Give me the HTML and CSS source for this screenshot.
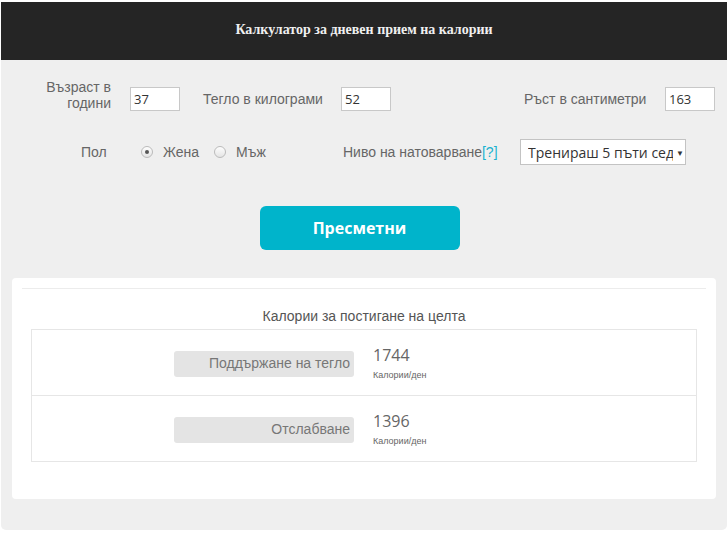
FILE: index.html
```html
<!DOCTYPE html>
<html lang="bg">
<head>
<meta charset="utf-8">
<link rel="stylesheet" href="styles.css">
</head>
<body>
<div class="app">
  <header class="top">Калкулатор за дневен прием на калории</header>
  <section class="form">
    <div class="row row1">
      <label class="lbl lbl-age">Възраст в години</label>
      <input class="num" type="text" value="37">
      <label class="lbl lbl-weight">Тегло в килограми</label>
      <input class="num" type="text" value="52">
      <label class="lbl lbl-height">Ръст в сантиметри</label>
      <input class="num" type="text" value="163">
    </div>
    <div class="row row2">
      <span class="lbl lbl-sex">Пол</span>
      <span class="radios">
        <span class="radio on"></span><span class="rtext">Жена</span>
        <span class="radio"></span><span class="rtext">Мъж</span>
      </span>
      <span class="lbl lbl-level">Ниво на натоварване<a class="help">[?]</a></span>
      <div class="select"><span class="sel-text">Тренираш 5 пъти седмично</span><span class="arrow">▼</span></div>
    </div>
    <div class="btn-row"><button class="calc">Пресметни</button></div>
  </section>
  <section class="card">
    <div class="rule"></div>
    <h2 class="goal">Калории за постигане на целта</h2>
    <div class="results">
      <div class="res-row">
        <div class="tag">Поддържане на тегло</div>
        <div class="val"><div class="num-big">1744</div><div class="unit">Калории/ден</div></div>
      </div>
      <div class="res-row">
        <div class="tag">Отслабване</div>
        <div class="val"><div class="num-big">1396</div><div class="unit">Калории/ден</div></div>
      </div>
    </div>
  </section>
</div>
</body>
</html>
```
FILE: styles.css
```css
* { box-sizing: border-box; }
html, body { margin: 0; padding: 0; background: #fff; }
body { font-family: "Liberation Sans", Arial, sans-serif; color: #666; }
.app {
  margin: 2px 1px 0 1px;
  height: 528px;
  background: #efefef;
  border-radius: 0 0 5px 5px;
}
.top {
  height: 58px;
  background: #252525;
  color: #f0f0f0;
  font-family: "Liberation Serif", serif;
  font-weight: bold;
  font-size: 14px;
  display: flex;
  align-items: center;
  justify-content: center;
  padding-bottom: 2px;
}
.form { padding-top: 12px; }
.row { display: flex; align-items: center; }
.row1 { height: 46px; }
.lbl { font-size: 14px; color: #666; line-height: 16px; }
.lbl-age { width: 110px; text-align: right; padding-left: 40px; }
.num {
  width: 50px; height: 24px;
  border: 1px solid #c8c8c8;
  background: #fff;
  font-family: "Open Sans", sans-serif;
  font-size: 13px;
  color: #333;
  padding: 0 3px;
  margin: 0;
  outline: none;
}
.row1 .num { margin-top: 8px; }
.row1 .lbl-age + .num { margin-left: 19px; }
.lbl-weight { margin-left: 23px; margin-top: 8px; width: 138px; }
.lbl-height { margin-left: 133px; margin-top: 8px; width: 141px; }
.row2 { height: 48px; margin-top: 10px; }
.lbl-sex { margin-left: 80px; width: 60px; }
.radios { display: flex; align-items: center; width: 202px; }
.radio {
  width: 12px; height: 12px; border-radius: 50%;
  border: 1px solid #bbb;
  background: linear-gradient(#fdfdfd, #e4e4e4);
  position: relative;
}
.radio.on::after {
  content: ""; position: absolute; left: 3px; top: 3px;
  width: 4px; height: 4px; border-radius: 50%; background: #555;
}
.rtext { font-size: 14px; color: #666; margin-left: 10px; margin-right: 15px; }
.lbl-level { width: 177px; }
.help { color: #1ab2cf; }
.select {
  width: 166px; height: 26px;
  background: #fff; border: 1px solid #c3c3c3;
  display: flex; align-items: center;
  padding: 0 0 0 7px;
  font-family: "Open Sans", sans-serif; font-size: 14px; color: #333;
  overflow: hidden;
}
.sel-text { flex: none; white-space: nowrap; overflow: hidden; width: 145px; }
.arrow { flex: none; font-size: 8px; color: #333; margin-left: 3px; }
.btn-row { display: flex; justify-content: center; padding-top: 30px; margin-left: -9px; }
.calc {
  width: 200px; height: 44px;
  background: #00b4cb; color: #fff;
  border: none; border-radius: 6px;
  font-family: "Open Sans", sans-serif; font-weight: bold; font-size: 16px;
}
.card {
  margin: 28px 11px 0 11px;
  height: 221px;
  background: #fff;
  border-radius: 4px;
  padding: 10px 10px 0 10px;
}
.rule { height: 1px; background: #ececec; }
.goal {
  margin: 0; text-align: center;
  font-weight: normal; font-size: 14px; color: #555;
  padding-top: 19px; height: 40px;
}
.results { margin: 0 9px; border: 1px solid #e6e6e6; }
.res-row {
  height: 65px; display: flex; align-items: flex-start;
  padding-left: 142px;
}
.res-row + .res-row { border-top: 1px solid #e6e6e6; height: 66px; }
.tag {
  width: 180px; height: 26px; margin-top: 21px;
  background: #e4e4e4; border-radius: 3px;
  text-align: right; font-size: 14px; color: #777;
  padding: 4px 4px 0 0;
}
.val { margin-left: 19px; margin-top: 14px; }
.num-big { font-family: "Open Sans", sans-serif; font-size: 16px; color: #666; line-height: 22px; }
.unit { font-size: 9px; color: #666; font-family: "Liberation Sans", sans-serif; margin-top: 4px; }
```
